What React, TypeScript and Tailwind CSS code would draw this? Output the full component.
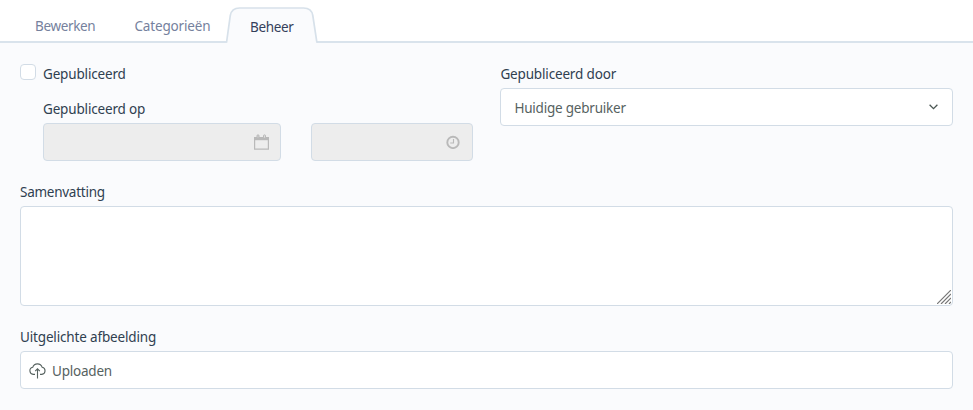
import type { ReactNode } from 'react';

function Label({ children, className = '' }: { children: ReactNode; className?: string }) {
  return <label className={`block h-5 leading-[21px] whitespace-nowrap text-[#2f4050] ${className}`}>{children}</label>;
}

const fieldBase = 'rounded-[4px] border border-[#d2dce6]';

function Tabs() {
  return (
    <nav className="flex h-[43px] items-start bg-white text-[#75819d] shadow-[inset_0_-2px_0_#d9e3ec]">
      <a className="mt-[16px] ml-[35px] w-[99.5px] leading-[21px] tracking-[-0.34px] whitespace-nowrap">Bewerken</a>
      <a className="mt-[16px] w-[91.5px] leading-[21px] whitespace-nowrap">Categorieën</a>
      <div className="relative h-[43px] w-[92px]">
        <svg className="absolute inset-0" width="92" height="43" viewBox="0 0 92 43" fill="none">
          <path d="M0.6 43V42L4.3 15.5C5.2 10.5 8.5 8 13.5 8H77.5C82.5 8 86 10.5 86.8 15.5L90.8 42V43Z" fill="#fafbfd" />
          <path d="M0 42H0.6L4.3 15.5C5.2 10.5 8.5 8 13.5 8H77.5C82.5 8 86 10.5 86.8 15.5L90.8 42H92" stroke="#d7e1ea" strokeWidth="1.7" />
        </svg>
        <a className="relative ml-6 block pt-[17px] leading-[21px] tracking-[-0.34px] text-[#343f5b]">Beheer</a>
      </div>
    </nav>
  );
}

function CalendarIcon() {
  return (
    <svg width="15" height="16" viewBox="0 0 15 16" fill="none" stroke="#b9b9b9">
      <path d="M.6 3.5h13.8v11.7H.6z" strokeWidth="1.2" />
      <path d="M.6 3h13.8v3.2H.6z" fill="#b9b9b9" stroke="none" />
      <rect x="3" y=".8" width="2" height="3.5" rx="1" fill="#d2d2d2" />
      <rect x="9.5" y=".8" width="2" height="3.5" rx="1" fill="#dedede" />
    </svg>
  );
}

function ClockIcon() {
  return (
    <svg width="14" height="14" viewBox="0 0 14 14" fill="none" stroke="#b9b9b9">
      <circle cx="7" cy="7.4" r="5.7" strokeWidth="1.9" />
      <path d="M7.5 4v4H4.2" strokeWidth="1.1" />
    </svg>
  );
}

function UploadIcon() {
  return (
    <svg className="mt-px" width="17" height="17" viewBox="0 0 17 17" fill="none" stroke="#56625f" strokeWidth="1.1">
      <path d="M6 12.4H4.2A3.6 3.6 0 0 1 3.7 5.3A5 5 0 0 1 13.2 5.3A3.6 3.6 0 0 1 12.8 12.4H11" />
      <path d="M8.5 16.5V7M6.2 9.1L8.5 6.8L10.8 9.1" />
    </svg>
  );
}

export default function App() {
  return (
    <main className="h-[410px] w-[973px] overflow-hidden bg-[#fafbfd] font-['Noto_Sans','Open_Sans',sans-serif] text-[13.5px] tracking-[-0.16px]">
      <Tabs />
      <div className="px-5 pt-[21px]">
        <div className="flex h-[118px] items-start">
          <div className="flex w-[480.4px]">
            <span className="h-4 w-4 shrink-0 rounded-[4px] border border-[#d2dce6] bg-white" />
            <div className="ml-[7px]">
              <Label>Gepubliceerd</Label>
              <Label className="mt-[15px]">Gepubliceerd op</Label>
              <div className="mt-1 flex gap-[30px]">
                <div className={`flex h-[38px] w-[238px] items-center justify-end bg-[#ededed] pr-[11px] ${fieldBase}`}>
                  <CalendarIcon />
                </div>
                <div className={`flex h-[38px] w-[162px] items-center justify-end bg-[#ededed] pr-[12px] ${fieldBase}`}>
                  <ClockIcon />
                </div>
              </div>
            </div>
          </div>
          <div className="w-[452.6px]">
            <Label>Gepubliceerd door</Label>
            <div className={`mt-1 flex h-[38px] items-center justify-between bg-white pr-[14px] pl-[13px] text-[#56625f] ${fieldBase}`}>
              <span className="pt-[3px] tracking-[-0.21px]">Huidige gebruiker</span>
              <svg width="9" height="6" viewBox="0 0 9 6" fill="none" stroke="#4b5753" strokeWidth="1.3">
                <path d="M.6 .8L4.5 4.7L8.4 .8" />
              </svg>
            </div>
          </div>
        </div>
        <Label className="tracking-[-0.26px]">Samenvatting</Label>
        <div className="relative mt-1 h-[100px]">
          <textarea className={`block h-full w-full resize-none bg-white ${fieldBase}`} />
          <svg className="absolute right-[2px] bottom-[2px]" width="14" height="14" viewBox="0 0 14 14" stroke="#777" strokeWidth="1.2">
            <path d="M0 14L14 0M4 14L14 4M8 14L14 8M12 14L14 12" />
          </svg>
        </div>
        <Label className="mt-[21px]">Uitgelichte afbeelding</Label>
        <div className={`mt-1 flex h-[38px] items-center gap-[6px] bg-white pl-2 text-[#56625f] ${fieldBase}`}>
          <UploadIcon />
          <span className="pt-[2px] tracking-[-0.22px]">Uploaden</span>
        </div>
      </div>
    </main>
  );
}
